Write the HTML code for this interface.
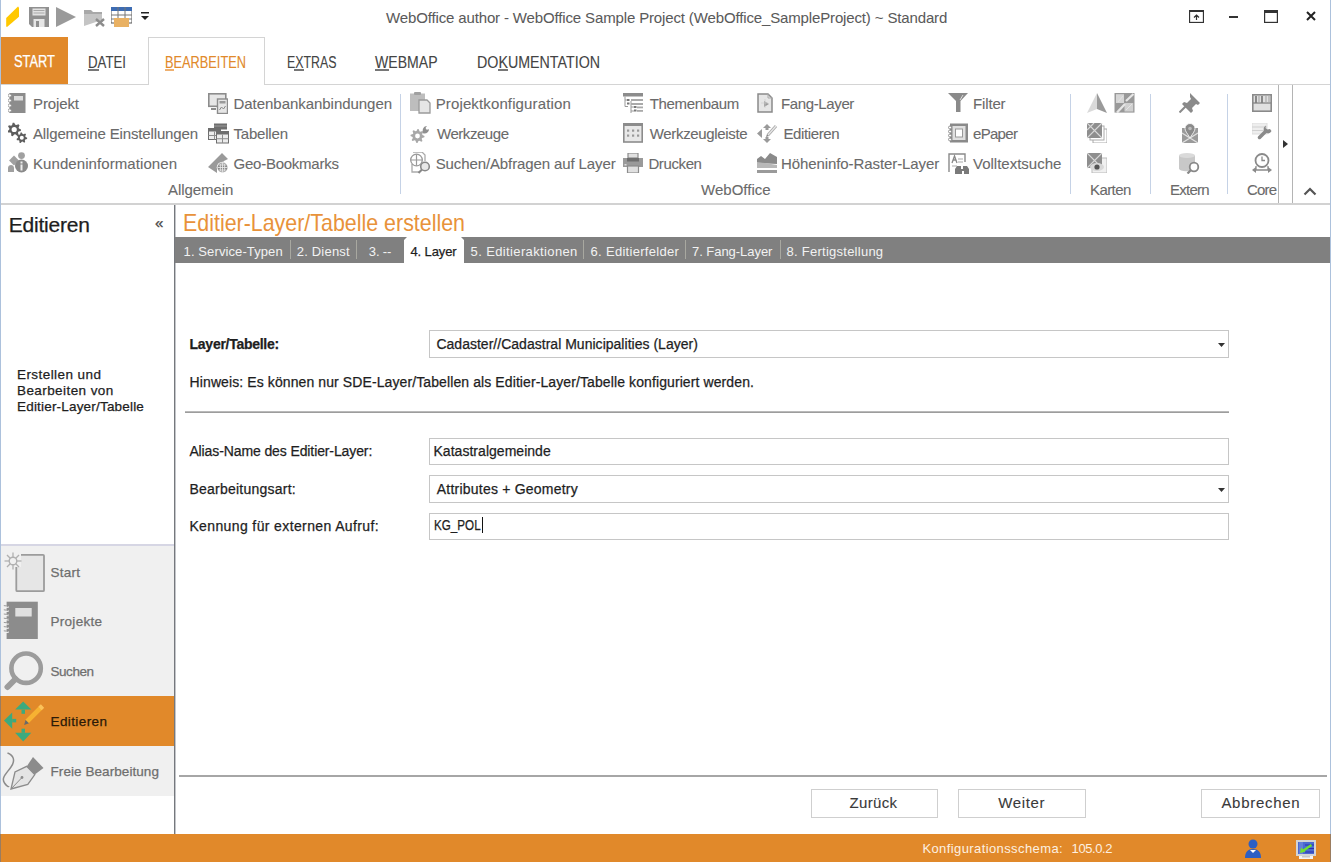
<!DOCTYPE html>
<html><head><meta charset="utf-8"><style>
html,body{margin:0;padding:0;width:1331px;height:862px;overflow:hidden;background:#fff;}
body{position:relative;font-family:"Liberation Sans",sans-serif;}
.t{position:absolute;white-space:nowrap;-webkit-text-stroke:0.25px currentColor;font-family:"Liberation Sans",sans-serif;}
svg{display:block;}
</style></head><body>
<div style="position:absolute;left:0px;top:0px;width:1331px;height:862px;background:#fff;"></div>
<div class="t" style="left:386px;top:10px;font-size:15px;line-height:15px;color:#5a5a5a;letter-spacing:-0.14px;-webkit-text-stroke:0.05px currentColor;">WebOffice author - WebOffice Sample Project (WebOffice_SampleProject) ~ Standard</div>
<svg style="position:absolute;left:6px;top:6px" width="14" height="22" viewBox="0 0 14 22"><polygon points="0.2,12 12,0.6 13,1.5 13,10.8 1,21 0.2,20.5" fill="#ffc800"/></svg>
<svg style="position:absolute;left:29px;top:7px" width="20" height="20" viewBox="0 0 20 20"><path d="M0 0h20v20H3l-3-3z" fill="#909090"/><rect x="3.5" y="1.5" width="13" height="7" fill="#e2e2e2"/><rect x="4.5" y="3" width="11" height="1" fill="#a8a8a8"/><rect x="4.5" y="5.5" width="11" height="1" fill="#a8a8a8"/><rect x="4.5" y="12" width="11" height="8" fill="#e6e6e6"/><rect x="7" y="14" width="3" height="6" fill="#909090"/></svg>
<svg style="position:absolute;left:56px;top:7px" width="20" height="20" viewBox="0 0 20 20"><polygon points="0,0 20,10 0,20" fill="#9a9a9a"/></svg>
<svg style="position:absolute;left:84px;top:8px" width="21" height="19" viewBox="0 0 21 19"><path d="M0 2h7l2 2h9v6H0z" fill="#a8a8a8"/><path d="M0 18V6h18v6" fill="#c4c4c4"/><path d="M12 11l8 7M20 11l-8 7" stroke="#8c8c8c" stroke-width="2.4"/></svg>
<svg style="position:absolute;left:111px;top:7px" width="21" height="20" viewBox="0 0 21 20"><rect x="0" y="0" width="21" height="16" fill="#fff" stroke="#555" stroke-width="1"/><rect x="0" y="0" width="21" height="4" fill="#3d6cb3"/><path d="M7 0v16M14 0v16M0 8h21M0 12h21" stroke="#777" stroke-width="1"/><rect x="3" y="11" width="15" height="9" fill="#e9b163"/></svg>
<svg style="position:absolute;left:141px;top:12px" width="9" height="9" viewBox="0 0 9 9"><rect x="0" y="0" width="8" height="1.5" fill="#222"/><polygon points="0,4 8,4 4,8" fill="#222"/></svg>
<svg style="position:absolute;left:1189px;top:10px" width="15" height="13" viewBox="0 0 15 13"><rect x="0.5" y="0.5" width="14" height="12" fill="none" stroke="#333" stroke-width="1.3"/><rect x="0" y="0" width="15" height="2" fill="#333"/><path d="M7.5 10V5M5 7.5l2.5-2.5 2.5 2.5" stroke="#333" stroke-width="1.2" fill="none"/></svg>
<div style="position:absolute;left:1229px;top:16px;width:9px;height:2px;background:#333;"></div>
<svg style="position:absolute;left:1264px;top:10px" width="14" height="13" viewBox="0 0 14 13"><rect x="0.6" y="0.6" width="12.8" height="11.8" fill="none" stroke="#333" stroke-width="1.2"/><rect x="0" y="0" width="14" height="3" fill="#333"/></svg>
<svg style="position:absolute;left:1306px;top:11px" width="10" height="10" viewBox="0 0 10 10"><path d="M1 1l8 8M9 1l-8 8" stroke="#222" stroke-width="2"/></svg>
<div style="position:absolute;left:1px;top:37px;width:67px;height:48px;background:#e1892a;"></div>
<div style="position:absolute;left:148px;top:37px;width:117px;height:48px;border:1px solid #d4d4d4;border-bottom:none;background:#fff;box-sizing:border-box;"></div>
<div style="position:absolute;left:1px;top:84px;width:147px;height:1px;background:#d4d4d4;"></div>
<div style="position:absolute;left:265px;top:84px;width:1065px;height:1px;background:#d4d4d4;"></div>
<div class="t" style="left:14px;top:54px;font-size:16px;line-height:16px;color:#fff;transform:scaleX(0.804);transform-origin:0 0;">START</div>
<div class="t" style="left:88px;top:55px;font-size:16px;line-height:16px;color:#444;transform:scaleX(0.827);transform-origin:0 0;-webkit-text-stroke:0.1px currentColor;">DATEI</div>
<div style="position:absolute;left:88px;top:69px;width:11px;height:2px;background:#777;"></div>
<div class="t" style="left:165px;top:55px;font-size:16px;line-height:16px;color:#e1892a;transform:scaleX(0.799);transform-origin:0 0;-webkit-text-stroke:0.1px currentColor;">BEARBEITEN</div>
<div style="position:absolute;left:165px;top:69px;width:9px;height:2px;background:#eeb070;"></div>
<div class="t" style="left:287px;top:55px;font-size:16px;line-height:16px;color:#444;transform:scaleX(0.773);transform-origin:0 0;-webkit-text-stroke:0.1px currentColor;">EXTRAS</div>
<div style="position:absolute;left:294px;top:69px;width:10px;height:2px;background:#777;"></div>
<div class="t" style="left:375px;top:55px;font-size:16px;line-height:16px;color:#444;transform:scaleX(0.879);transform-origin:0 0;-webkit-text-stroke:0.1px currentColor;">WEBMAP</div>
<div style="position:absolute;left:375px;top:69px;width:14px;height:2px;background:#777;"></div>
<div class="t" style="left:477px;top:55px;font-size:16px;line-height:16px;color:#444;transform:scaleX(0.891);transform-origin:0 0;-webkit-text-stroke:0.1px currentColor;">DOKUMENTATION</div>
<div style="position:absolute;left:498px;top:69px;width:10px;height:2px;background:#777;"></div>
<div class="t" style="left:33px;top:96px;font-size:15px;line-height:15px;color:#6a6a6a;letter-spacing:-0.11px;-webkit-text-stroke:0.1px currentColor;">Projekt</div>
<div class="t" style="left:33px;top:126px;font-size:15px;line-height:15px;color:#6a6a6a;letter-spacing:-0.15px;-webkit-text-stroke:0.1px currentColor;">Allgemeine Einstellungen</div>
<div class="t" style="left:33px;top:156px;font-size:15px;line-height:15px;color:#6a6a6a;letter-spacing:0.08px;-webkit-text-stroke:0.1px currentColor;">Kundeninformationen</div>
<div class="t" style="left:233.5px;top:96px;font-size:15px;line-height:15px;color:#6a6a6a;letter-spacing:-0.04px;-webkit-text-stroke:0.1px currentColor;">Datenbankanbindungen</div>
<div class="t" style="left:233.5px;top:126px;font-size:15px;line-height:15px;color:#6a6a6a;letter-spacing:-0.20px;-webkit-text-stroke:0.1px currentColor;">Tabellen</div>
<div class="t" style="left:233.5px;top:156px;font-size:15px;line-height:15px;color:#6a6a6a;letter-spacing:-0.24px;-webkit-text-stroke:0.1px currentColor;">Geo-Bookmarks</div>
<div class="t" style="left:168px;top:182px;font-size:15px;line-height:15px;color:#6a6a6a;letter-spacing:-0.05px;-webkit-text-stroke:0.1px currentColor;">Allgemein</div>
<div class="t" style="left:435.7px;top:96px;font-size:15px;line-height:15px;color:#6a6a6a;letter-spacing:0.13px;-webkit-text-stroke:0.1px currentColor;">Projektkonfiguration</div>
<div class="t" style="left:437px;top:126px;font-size:15px;line-height:15px;color:#6a6a6a;letter-spacing:-0.45px;-webkit-text-stroke:0.1px currentColor;">Werkzeuge</div>
<div class="t" style="left:435.7px;top:156px;font-size:15px;line-height:15px;color:#6a6a6a;letter-spacing:-0.11px;-webkit-text-stroke:0.1px currentColor;">Suchen/Abfragen auf Layer</div>
<div class="t" style="left:649.8px;top:96px;font-size:15px;line-height:15px;color:#6a6a6a;letter-spacing:-0.35px;-webkit-text-stroke:0.1px currentColor;">Themenbaum</div>
<div class="t" style="left:649.8px;top:126px;font-size:15px;line-height:15px;color:#6a6a6a;letter-spacing:-0.34px;-webkit-text-stroke:0.1px currentColor;">Werkzeugleiste</div>
<div class="t" style="left:648.4px;top:156px;font-size:15px;line-height:15px;color:#6a6a6a;letter-spacing:-0.38px;-webkit-text-stroke:0.1px currentColor;">Drucken</div>
<div class="t" style="left:701px;top:182px;font-size:15px;line-height:15px;color:#6a6a6a;letter-spacing:0.02px;-webkit-text-stroke:0.1px currentColor;">WebOffice</div>
<div class="t" style="left:780.9px;top:96px;font-size:15px;line-height:15px;color:#6a6a6a;letter-spacing:-0.36px;-webkit-text-stroke:0.1px currentColor;">Fang-Layer</div>
<div class="t" style="left:783.4px;top:126px;font-size:15px;line-height:15px;color:#6a6a6a;letter-spacing:-0.38px;-webkit-text-stroke:0.1px currentColor;">Editieren</div>
<div class="t" style="left:780.9px;top:156px;font-size:15px;line-height:15px;color:#6a6a6a;letter-spacing:-0.08px;-webkit-text-stroke:0.1px currentColor;">Höheninfo-Raster-Layer</div>
<div class="t" style="left:973px;top:96px;font-size:15px;line-height:15px;color:#6a6a6a;letter-spacing:-0.15px;-webkit-text-stroke:0.1px currentColor;">Filter</div>
<div class="t" style="left:973px;top:126px;font-size:15px;line-height:15px;color:#6a6a6a;letter-spacing:-0.69px;-webkit-text-stroke:0.1px currentColor;">ePaper</div>
<div class="t" style="left:973px;top:156px;font-size:15px;line-height:15px;color:#6a6a6a;-webkit-text-stroke:0.1px currentColor;">Volltextsuche</div>
<div class="t" style="left:1090px;top:182px;font-size:15px;line-height:15px;color:#6a6a6a;letter-spacing:-0.58px;-webkit-text-stroke:0.1px currentColor;">Karten</div>
<div class="t" style="left:1170px;top:182px;font-size:15px;line-height:15px;color:#6a6a6a;letter-spacing:-0.73px;-webkit-text-stroke:0.1px currentColor;">Extern</div>
<div class="t" style="left:1247px;top:182px;font-size:15px;line-height:15px;color:#6a6a6a;letter-spacing:-0.84px;width:31px;overflow:hidden;-webkit-text-stroke:0.1px currentColor;">Core</div>
<div style="position:absolute;left:400px;top:94px;width:1px;height:100px;background:#c5d2e6;"></div>
<div style="position:absolute;left:1070px;top:94px;width:1px;height:100px;background:#c5d2e6;"></div>
<div style="position:absolute;left:1150px;top:94px;width:1px;height:100px;background:#c5d2e6;"></div>
<div style="position:absolute;left:1227px;top:94px;width:1px;height:100px;background:#c5d2e6;"></div>
<div style="position:absolute;left:1278px;top:85px;width:15px;height:119px;border:1px solid #b4b4b4;border-bottom:none;border-top:none;box-sizing:border-box;background:#fff;"></div>
<svg style="position:absolute;left:1283px;top:140px" width="5" height="8" viewBox="0 0 5 8"><polygon points="0,0 5,4 0,8" fill="#333"/></svg>
<svg style="position:absolute;left:1303px;top:187px" width="14" height="9" viewBox="0 0 14 9"><path d="M1.5 7.5L7 2l5.5 5.5" stroke="#555" stroke-width="2.2" fill="none"/></svg>
<div style="position:absolute;left:1px;top:203px;width:1329px;height:2px;background:#d2d2d2;"></div>
<div style="position:absolute;left:174px;top:205px;width:1px;height:629px;background:#75787d;"></div>
<div style="position:absolute;left:175px;top:205px;width:1px;height:629px;background:#c4c6ca;"></div>
<div class="t" style="left:8.7px;top:214px;font-size:21px;line-height:21px;color:#1e1e1e;letter-spacing:-0.20px;">Editieren</div>
<div class="t" style="left:155px;top:215px;font-size:15px;line-height:15px;color:#444;">«</div>
<div class="t" style="left:17px;top:368px;font-size:13.5px;line-height:13.5px;color:#1e1e1e;letter-spacing:0.43px;">Erstellen und</div>
<div class="t" style="left:17px;top:384px;font-size:13.5px;line-height:13.5px;color:#1e1e1e;letter-spacing:0.42px;">Bearbeiten von</div>
<div class="t" style="left:17px;top:400px;font-size:13.5px;line-height:13.5px;color:#1e1e1e;letter-spacing:0.19px;">Editier-Layer/Tabelle</div>
<div style="position:absolute;left:1px;top:544px;width:173px;height:252px;background:#f0f0f0;"></div>
<div style="position:absolute;left:1px;top:544px;width:173px;height:2px;background:#d6d6e4;"></div>
<div style="position:absolute;left:0px;top:696px;width:174px;height:50px;background:#e1892a;"></div>
<div class="t" style="left:50.5px;top:566px;font-size:13.5px;line-height:13.5px;color:#6e6e6e;letter-spacing:0.25px;">Start</div>
<div class="t" style="left:50.5px;top:615px;font-size:13.5px;line-height:13.5px;color:#6e6e6e;letter-spacing:0.28px;">Projekte</div>
<div class="t" style="left:50.5px;top:665px;font-size:13.5px;line-height:13.5px;color:#6e6e6e;letter-spacing:-0.46px;">Suchen</div>
<div class="t" style="left:50.5px;top:715px;font-size:13.5px;line-height:13.5px;color:#2b1a08;letter-spacing:0.40px;">Editieren</div>
<div class="t" style="left:50.5px;top:765px;font-size:13.5px;line-height:13.5px;color:#6e6e6e;letter-spacing:0.07px;">Freie Bearbeitung</div>
<div class="t" style="left:182.5px;top:210.5px;font-size:24px;line-height:24px;color:#e8923a;transform:scaleX(0.892);transform-origin:0 0;-webkit-text-stroke:0;">Editier-Layer/Tabelle erstellen</div>
<div style="position:absolute;left:175px;top:237px;width:1155px;height:26px;background:#808080;"></div>
<div style="position:absolute;left:404px;top:237px;width:60px;height:26px;background:#fff;"></div>
<svg style="position:absolute;left:401px;top:237px" width="6" height="4" viewBox="0 0 6 4"><polygon points="0,0 6,0 3,3 3,4 0,4" fill="#808080"/></svg>
<svg style="position:absolute;left:461px;top:237px" width="6" height="4" viewBox="0 0 6 4"><polygon points="0,0 6,0 6,4 3,4 3,3" fill="#808080"/></svg>
<div class="t" style="left:183.6px;top:245px;font-size:13px;line-height:13px;color:#f2f2f2;letter-spacing:0.10px;-webkit-text-stroke:0;">1. Service-Typen</div>
<div class="t" style="left:296.7px;top:245px;font-size:13px;line-height:13px;color:#f2f2f2;letter-spacing:0.21px;-webkit-text-stroke:0;">2. Dienst</div>
<div class="t" style="left:368.8px;top:245px;font-size:13px;line-height:13px;color:#f2f2f2;letter-spacing:-0.13px;-webkit-text-stroke:0;">3. --</div>
<div class="t" style="left:410.5px;top:245px;font-size:13px;line-height:13px;color:#1e1e1e;letter-spacing:-0.11px;">4. Layer</div>
<div class="t" style="left:470.6px;top:245px;font-size:13px;line-height:13px;color:#f2f2f2;letter-spacing:0.37px;-webkit-text-stroke:0;">5. Editieraktionen</div>
<div class="t" style="left:590.6px;top:245px;font-size:13px;line-height:13px;color:#f2f2f2;letter-spacing:0.29px;-webkit-text-stroke:0;">6. Editierfelder</div>
<div class="t" style="left:692px;top:245px;font-size:13px;line-height:13px;color:#f2f2f2;letter-spacing:-0.04px;-webkit-text-stroke:0;">7. Fang-Layer</div>
<div class="t" style="left:786.6px;top:245px;font-size:13px;line-height:13px;color:#f2f2f2;letter-spacing:0.25px;-webkit-text-stroke:0;">8. Fertigstellung</div>
<div style="position:absolute;left:290px;top:240px;width:1px;height:19px;background:#a8a8a0;"></div>
<div style="position:absolute;left:356px;top:240px;width:1px;height:19px;background:#a8a8a0;"></div>
<div style="position:absolute;left:583px;top:240px;width:1px;height:19px;background:#a8a8a0;"></div>
<div style="position:absolute;left:685px;top:240px;width:1px;height:19px;background:#a8a8a0;"></div>
<div style="position:absolute;left:780px;top:240px;width:1px;height:19px;background:#a8a8a0;"></div>
<div class="t" style="left:189.6px;top:337px;font-size:14px;line-height:14px;color:#1e1e1e;letter-spacing:-0.28px;font-weight:bold;">Layer/Tabelle:</div>
<div style="position:absolute;left:429px;top:330px;width:800px;height:28px;border:1.5px solid #c6c6c6;box-sizing:border-box;background:#fff;"></div>
<div class="t" style="left:436.4px;top:337px;font-size:14px;line-height:14px;color:#1e1e1e;letter-spacing:0.02px;">Cadaster//Cadastral Municipalities (Layer)</div>
<svg style="position:absolute;left:1218px;top:343px" width="7" height="4" viewBox="0 0 7 4"><polygon points="0,0 7,0 3.5,4" fill="#333"/></svg>
<div class="t" style="left:189.6px;top:375px;font-size:14px;line-height:14px;color:#1e1e1e;letter-spacing:0.10px;">Hinweis: Es können nur SDE-Layer/Tabellen als Editier-Layer/Tabelle konfiguriert werden.</div>
<div style="position:absolute;left:185px;top:411px;width:1044px;height:2px;background:linear-gradient(#c8c8c8,#8e8e8e);"></div>
<div class="t" style="left:189.4px;top:444px;font-size:14px;line-height:14px;color:#1e1e1e;letter-spacing:-0.11px;">Alias-Name des Editier-Layer:</div>
<div style="position:absolute;left:429px;top:438px;width:800px;height:27px;border:1.5px solid #c6c6c6;box-sizing:border-box;background:#fff;"></div>
<div class="t" style="left:433.5px;top:444px;font-size:14px;line-height:14px;color:#1e1e1e;letter-spacing:0.03px;">Katastralgemeinde</div>
<div class="t" style="left:189.4px;top:482px;font-size:14px;line-height:14px;color:#1e1e1e;letter-spacing:0.24px;">Bearbeitungsart:</div>
<div style="position:absolute;left:429px;top:475px;width:800px;height:28px;border:1.5px solid #c6c6c6;box-sizing:border-box;background:#fff;"></div>
<div class="t" style="left:436.8px;top:482px;font-size:14px;line-height:14px;color:#1e1e1e;letter-spacing:0.22px;">Attributes + Geometry</div>
<svg style="position:absolute;left:1218px;top:488px" width="7" height="4" viewBox="0 0 7 4"><polygon points="0,0 7,0 3.5,4" fill="#333"/></svg>
<div class="t" style="left:189.4px;top:519px;font-size:14px;line-height:14px;color:#1e1e1e;letter-spacing:0.38px;">Kennung für externen Aufruf:</div>
<div style="position:absolute;left:429px;top:513px;width:800px;height:27px;border:1.5px solid #c6c6c6;box-sizing:border-box;background:#fff;"></div>
<div class="t" style="left:433.5px;top:518px;font-size:14px;line-height:14px;color:#1e1e1e;transform:scaleX(0.832);transform-origin:0 0;">KG_POL</div>
<div style="position:absolute;left:482px;top:517px;width:1px;height:16px;background:#111;"></div>
<div style="position:absolute;left:179px;top:775px;width:1148px;height:2px;background:#a6a6a6;"></div>
<div style="position:absolute;left:811px;top:789px;width:127px;height:29px;border:1px solid #cfcfcf;box-sizing:border-box;background:#fff;"></div>
<div class="t" style="left:849.6px;top:795px;font-size:15px;line-height:15px;color:#3a3a3a;letter-spacing:0.31px;-webkit-text-stroke:0.1px currentColor;">Zurück</div>
<div style="position:absolute;left:958px;top:789px;width:128px;height:29px;border:1px solid #cfcfcf;box-sizing:border-box;background:#fff;"></div>
<div class="t" style="left:998.3px;top:795px;font-size:15px;line-height:15px;color:#3a3a3a;letter-spacing:0.63px;-webkit-text-stroke:0.1px currentColor;">Weiter</div>
<div style="position:absolute;left:1201px;top:789px;width:119px;height:29px;border:1px solid #cfcfcf;box-sizing:border-box;background:#fff;"></div>
<div class="t" style="left:1221.4px;top:795px;font-size:15px;line-height:15px;color:#3a3a3a;letter-spacing:0.72px;-webkit-text-stroke:0.1px currentColor;">Abbrechen</div>
<div style="position:absolute;left:0px;top:834px;width:1331px;height:28px;background:#e1892a;"></div>
<div class="t" style="left:922.4px;top:842px;font-size:13px;line-height:13px;color:#fdf0e0;letter-spacing:0.40px;-webkit-text-stroke:0;">Konfigurationsschema:</div>
<div class="t" style="left:1071.6px;top:842px;font-size:13px;line-height:13px;color:#fdf0e0;letter-spacing:-0.43px;-webkit-text-stroke:0;">105.0.2</div>
<svg style="position:absolute;left:1245px;top:839px" width="16" height="20" viewBox="0 0 16 20"><circle cx="8" cy="5" r="4.5" fill="#2c5fc4"/><path d="M0 19c0-6 3-9 8-9s8 3 8 9z" fill="#2c5fc4"/><path d="M5 11l3 3 3-3z" fill="#fff"/></svg>
<svg style="position:absolute;left:1296px;top:840px" width="20" height="19" viewBox="0 0 20 19"><rect x="0" y="0" width="20" height="16" fill="#d4d4d4"/><rect x="2" y="2" width="16" height="12" fill="#4a6ad0"/><path d="M4 2v12M6 2v12" stroke="#8aa0e8" stroke-width="0.8"/><path d="M9 5h9M9 8.5h9M9 12h9" stroke="#2830b0" stroke-width="1"/><path d="M15.5 5L6 11.5" stroke="#6ee030" stroke-width="2.2"/><polygon points="4,13 5,7.5 9.5,11.5" fill="#6ee030"/><rect x="3" y="16" width="14" height="3" fill="#f4f4f4"/><rect x="6" y="16" width="8" height="1.5" fill="#c8c8c8"/></svg>
<svg style="position:absolute;left:8px;top:93px" width="18" height="20" viewBox="0 0 18 20"><rect x="1.5" y="0" width="16" height="20" fill="#8c8c8c"/><rect x="6" y="3" width="9" height="4.5" fill="#dcdcdc"/><circle cx="1.8" cy="2.5" r="1.6" fill="#fff" stroke="#8c8c8c" stroke-width="0.8"/><circle cx="1.8" cy="7.5" r="1.6" fill="#fff" stroke="#8c8c8c" stroke-width="0.8"/><circle cx="1.8" cy="12.5" r="1.6" fill="#fff" stroke="#8c8c8c" stroke-width="0.8"/><circle cx="1.8" cy="17.5" r="1.6" fill="#fff" stroke="#8c8c8c" stroke-width="0.8"/></svg>
<svg style="position:absolute;left:8px;top:122px" width="20" height="21" viewBox="0 0 20 21"><path d="M13.00,7.50 L12.83,9.01 L10.61,9.62 L10.03,10.55 L10.44,12.82 L9.15,13.63 L7.29,12.27 L6.20,12.40 L4.69,14.13 L3.25,13.63 L3.15,11.33 L2.37,10.55 L0.07,10.45 L-0.43,9.01 L1.30,7.50 L1.43,6.41 L0.07,4.55 L0.88,3.26 L3.15,3.67 L4.08,3.09 L4.69,0.87 L6.20,0.70 L7.29,2.73 L8.32,3.09 L10.44,2.18 L11.52,3.26 L10.61,5.38 L10.97,6.41Z M8.8,7.5 a2.6,2.6 0 1,0 -5.2,0 a2.6,2.6 0 1,0 5.2,0Z" fill="#5e5e5e" fill-rule="evenodd"/><path d="M19.20,15.80 L19.06,17.00 L17.30,17.49 L16.84,18.22 L17.17,20.02 L16.14,20.67 L14.67,19.59 L13.80,19.69 L12.60,21.06 L11.46,20.67 L11.38,18.84 L10.76,18.22 L8.93,18.14 L8.54,17.00 L9.91,15.80 L10.01,14.93 L8.93,13.46 L9.58,12.43 L11.38,12.76 L12.11,12.30 L12.60,10.54 L13.80,10.40 L14.67,12.01 L15.49,12.30 L17.17,11.58 L18.02,12.43 L17.30,14.11 L17.59,14.93Z M15.8,15.8 a2.0,2.0 0 1,0 -4.0,0 a2.0,2.0 0 1,0 4.0,0Z" fill="#5e5e5e" fill-rule="evenodd"/></svg>
<svg style="position:absolute;left:7px;top:152px" width="21" height="21" viewBox="0 0 21 21"><circle cx="14.5" cy="3.6" r="3.4" fill="#a0a0a0"/><rect x="3.5" y="5" width="7" height="7" transform="rotate(45 7 8.5)" fill="#a0a0a0"/><path d="M1 20v-4c0-2 1.5-3 3-3s3 1 3 3v4z" fill="#a0a0a0"/><circle cx="14.5" cy="14" r="6.5" fill="#8a8a8a"/><rect x="13.5" y="9.5" width="2" height="2" fill="#eee"/><rect x="13.5" y="12.5" width="2" height="6" fill="#eee"/></svg>
<svg style="position:absolute;left:208px;top:93px" width="20" height="21" viewBox="0 0 20 21"><rect x="0.8" y="0.8" width="17" height="12.5" fill="#e6e6e6" stroke="#8c8c8c" stroke-width="1.6"/><rect x="3" y="15" width="5" height="2" fill="#8c8c8c"/><rect x="9.5" y="6" width="10" height="14.5" fill="#e6e6e6" stroke="#8c8c8c" stroke-width="1.4"/><rect x="11.5" y="8" width="6" height="2.5" fill="#9a9a9a"/><path d="M11.5 17l2-3 2 2 2-3" stroke="#888" stroke-width="1" fill="none"/></svg>
<svg style="position:absolute;left:208px;top:123px" width="21" height="21" viewBox="0 0 21 21"><rect x="6" y="0.5" width="13" height="6" fill="#6e6e6e"/><path d="M6 3h13" stroke="#aaa" stroke-width="0.8"/><rect x="0.5" y="5.5" width="12" height="11" fill="#ececec" stroke="#6e6e6e" stroke-width="1"/><rect x="0.5" y="5.5" width="12" height="3" fill="#6e6e6e"/><path d="M6.5 8.5v8M0.5 12.5h12" stroke="#8c8c8c" stroke-width="1"/><rect x="8.5" y="8.5" width="12" height="11.5" fill="#ececec" stroke="#6e6e6e" stroke-width="1"/><rect x="8.5" y="8.5" width="12" height="3" fill="#6e6e6e"/><path d="M14.5 11.5v8.5M8.5 15.75h12" stroke="#8c8c8c" stroke-width="1"/></svg>
<svg style="position:absolute;left:208px;top:153px" width="21" height="21" viewBox="0 0 21 21"><polygon points="0,14 14,0 20,6 16,8 9,16 9,20" fill="#9a9a9a"/><circle cx="14.5" cy="14.5" r="5.8" fill="#fff"/><circle cx="14.5" cy="14.5" r="5" fill="#8a8a8a"/><path d="M9.5 14.5h10M14.5 9.5v10M10.5 12h8M10.5 17h8" stroke="#eee" stroke-width="0.8"/><ellipse cx="14.5" cy="14.5" rx="2.2" ry="5" fill="none" stroke="#eee" stroke-width="0.8"/></svg>
<svg style="position:absolute;left:410px;top:92px" width="21" height="22" viewBox="0 0 21 22"><rect x="0" y="1.5" width="15" height="17.5" fill="#bdbdbd"/><rect x="4" y="0" width="7" height="3" rx="1" fill="#a0a0a0"/><path d="M9 8h8l3 3v10H9z" fill="#e6e6e6" stroke="#9a9a9a" stroke-width="1.3"/></svg>
<svg style="position:absolute;left:410px;top:123px" width="21" height="21" viewBox="0 0 21 21"><path d="M14.50,13.00 L14.37,14.37 L12.16,14.93 L11.69,15.80 L12.45,17.95 L11.39,18.82 L9.43,17.66 L8.48,17.94 L7.50,20.00 L6.13,19.87 L5.57,17.66 L4.70,17.19 L2.55,17.95 L1.68,16.89 L2.84,14.93 L2.56,13.98 L0.50,13.00 L0.63,11.63 L2.84,11.07 L3.31,10.20 L2.55,8.05 L3.61,7.18 L5.57,8.34 L6.52,8.06 L7.50,6.00 L8.87,6.13 L9.43,8.34 L10.30,8.81 L12.45,8.05 L13.32,9.11 L12.16,11.07 L12.44,12.02Z M9.9,13 a2.4,2.4 0 1,0 -4.8,0 a2.4,2.4 0 1,0 4.8,0Z" fill="#a8a8a8" fill-rule="evenodd"/><path d="M13 9c-1-3 1-6 4-6l-1.5 2 1.2 1.8 2.3-.6c0 3-3 5-6 4z" fill="#909090"/></svg>
<svg style="position:absolute;left:410px;top:152px" width="21" height="22" viewBox="0 0 21 22"><path d="M3 0h9l3 3v6" stroke="#aaa" stroke-width="1.3" fill="none"/><path d="M2 12v8h7" stroke="#aaa" stroke-width="1.3" fill="none"/><circle cx="6.5" cy="8" r="5.8" fill="none" stroke="#9a9a9a" stroke-width="1.3"/><path d="M0.8 8h11.5M6.5 2.2v11.6" stroke="#9a9a9a" stroke-width="1.2"/><circle cx="15" cy="14.5" r="4.3" fill="#e8e8e8" stroke="#888" stroke-width="1.6"/><path d="M12 17.5l-3.5 3.5" stroke="#888" stroke-width="2.2"/></svg>
<svg style="position:absolute;left:623px;top:93px" width="20" height="20" viewBox="0 0 20 20"><rect x="0" y="0" width="20" height="3.5" fill="#8c8c8c"/><path d="M2 3.5v10h3M2 7h3M8 8v12M8 14h3M8 18h3" stroke="#999" stroke-width="1" fill="none"/><rect x="4" y="6" width="2.5" height="2" fill="#777"/><rect x="4" y="9.5" width="2.5" height="2" fill="#777"/><rect x="8" y="6" width="12" height="2" fill="#aaa"/><rect x="8" y="10" width="12" height="2" fill="#aaa"/><rect x="11" y="13" width="2.5" height="2" fill="#777"/><rect x="11" y="16.5" width="2.5" height="2" fill="#777"/><rect x="14" y="13.5" width="6" height="1.8" fill="#aaa"/><rect x="14" y="17" width="6" height="1.8" fill="#aaa"/></svg>
<svg style="position:absolute;left:623px;top:123px" width="20" height="20" viewBox="0 0 20 20"><rect x="0.8" y="0.8" width="18.4" height="18.2" fill="#e8e8e8" stroke="#8c8c8c" stroke-width="1.6"/><rect x="0" y="0" width="20" height="3" fill="#8c8c8c"/><rect x="4" y="6.5" width="2.2" height="2.2" fill="#999"/><rect x="9" y="6.5" width="2.2" height="2.2" fill="#999"/><rect x="14" y="6.5" width="2.2" height="2.2" fill="#999"/><rect x="4" y="11.5" width="2.2" height="2.2" fill="#999"/><rect x="9" y="11.5" width="2.2" height="2.2" fill="#999"/><rect x="14" y="11.5" width="2.2" height="2.2" fill="#999"/></svg>
<svg style="position:absolute;left:623px;top:153px" width="20" height="20" viewBox="0 0 20 20"><rect x="5" y="0" width="10" height="5" fill="#e0e0e0" stroke="#8c8c8c" stroke-width="1.2"/><rect x="0" y="5" width="20" height="9" fill="#9a9a9a"/><rect x="4" y="5" width="12" height="3.5" fill="#6e6e6e"/><rect x="4.5" y="13" width="11" height="7" fill="#e0e0e0" stroke="#8c8c8c" stroke-width="1.2"/><rect x="1.5" y="11" width="2" height="1.5" fill="#ddd"/></svg>
<svg style="position:absolute;left:757px;top:93px" width="16" height="20" viewBox="0 0 16 20"><path d="M1 1h10l4 4v14H1z" fill="#e6e6e6" stroke="#8a8a8a" stroke-width="1.5"/><path d="M11 1v4h4" fill="none" stroke="#aaa" stroke-width="1"/><polygon points="7,8 12,11 7,14" fill="#999"/><path d="M4 10h7M8 6v9" stroke="#ccc" stroke-width="0.7"/></svg>
<svg style="position:absolute;left:757px;top:123px" width="21" height="21" viewBox="0 0 21 21"><polygon points="6,5 14,5 10,1" fill="#9a9a9a"/><rect x="8.5" y="5" width="3" height="2" fill="#9a9a9a"/><polygon points="0,10.5 5,6 5,15" fill="#9a9a9a"/><polygon points="6,16 14,16 10,20" fill="#9a9a9a"/><rect x="8.5" y="14" width="3" height="2" fill="#9a9a9a"/><path d="M11 12L19 3" stroke="#aaa" stroke-width="3"/><path d="M11 12L19 3" stroke="#e8e8e8" stroke-width="1.2"/><polygon points="9,14 10,11 12,13" fill="#888"/></svg>
<svg style="position:absolute;left:757px;top:153px" width="20" height="20" viewBox="0 0 20 20"><polygon points="0,6 4,3 8,6 13,0 20,4 20,11 0,10" fill="#8a8a8a"/><polygon points="0,9 8,10 14,11 20,12 20,15 0,15" fill="#b8b8b8"/><rect x="0" y="17" width="20" height="3" fill="#9a9a9a"/></svg>
<svg style="position:absolute;left:948px;top:93px" width="20" height="19" viewBox="0 0 20 19"><polygon points="0,0 20,0 12.5,8 12.5,19 8,19 8,8" fill="#8a8a8a"/><path d="M15 2l-3 5" stroke="#ddd" stroke-width="1"/></svg>
<svg style="position:absolute;left:948px;top:123px" width="20" height="20" viewBox="0 0 20 20"><rect x="2" y="0.5" width="18" height="19" fill="#8a8a8a"/><rect x="4.5" y="3" width="13" height="14" fill="#e0e0e0"/><rect x="7.5" y="6" width="7" height="8" fill="#fff" stroke="#999" stroke-width="1"/><circle cx="2" cy="4.5" r="1.5" fill="#fff" stroke="#8a8a8a" stroke-width="0.9"/><circle cx="2" cy="8.5" r="1.5" fill="#fff" stroke="#8a8a8a" stroke-width="0.9"/><circle cx="2" cy="12.5" r="1.5" fill="#fff" stroke="#8a8a8a" stroke-width="0.9"/><circle cx="2" cy="16.5" r="1.5" fill="#fff" stroke="#8a8a8a" stroke-width="0.9"/></svg>
<svg style="position:absolute;left:948px;top:153px" width="21" height="21" viewBox="0 0 21 21"><path d="M1 19V1h16v8" fill="none" stroke="#8a8a8a" stroke-width="1.4"/><path d="M4 10l2.5-7 2.5 7M5 7h3" stroke="#888" stroke-width="1.3" fill="none"/><path d="M10 6h5M10 9h5M4 13h5" stroke="#aaa" stroke-width="1.2"/><path d="M7 21v-5l2-3h4v3h2v-3h4l2 3v5h-5v-3h-2v3z" fill="#7a7a7a"/></svg>
<svg style="position:absolute;left:1087px;top:93px" width="20" height="20" viewBox="0 0 20 20"><polygon points="10,0 10,16 0,20" fill="#dadada"/><polygon points="10,0 20,20 10,16" fill="#9a9a9a"/></svg>
<svg style="position:absolute;left:1114px;top:93px" width="21" height="20" viewBox="0 0 21 20"><rect x="0.5" y="0" width="20" height="19.6" fill="#999"/><rect x="2" y="1.2" width="8" height="8.8" fill="#d6d6d6"/><rect x="10.5" y="10" width="8.7" height="8.5" fill="#d0d0d0"/><path d="M3 19.6L11 11M12 8L19.5 1" stroke="#e6e6e6" stroke-width="2.2"/><path d="M4 9L9 3M12 17l6-6" stroke="#e4e4e4" stroke-width="1"/></svg>
<svg style="position:absolute;left:1087px;top:123px" width="20" height="20" viewBox="0 0 20 20"><rect x="6" y="6" width="14" height="14" fill="#fff" stroke="#aaa" stroke-width="1"/><rect x="3" y="3" width="14" height="14" fill="#fff" stroke="#aaa" stroke-width="1"/><rect x="0" y="0" width="15" height="15" fill="#8e8e8e"/><path d="M0 0L15 15M15 0L0 15M0 7l7-7" stroke="#d8d8d8" stroke-width="1.2"/></svg>
<svg style="position:absolute;left:1087px;top:153px" width="20" height="20" viewBox="0 0 20 20"><rect x="5" y="5" width="15" height="15" fill="#f0f0f0" stroke="#bbb" stroke-width="1"/><rect x="0" y="0" width="15" height="15" fill="#8e8e8e"/><path d="M0 0L15 15M15 0L0 15" stroke="#d8d8d8" stroke-width="1.2"/><ellipse cx="10" cy="14" rx="7" ry="4" fill="#d8d8d8"/><circle cx="10" cy="14" r="2.6" fill="#555"/></svg>
<svg style="position:absolute;left:1179px;top:93px" width="21" height="20" viewBox="0 0 21 20"><path d="M11 0l10 10-2 2-2-1-4 4 1 3-2 2-9-9 2-2 3 1 4-4-1-2z" fill="#8a8a8a"/><path d="M7 13L0.5 19.5" stroke="#8a8a8a" stroke-width="2"/></svg>
<svg style="position:absolute;left:1182px;top:123px" width="16" height="20" viewBox="0 0 16 20"><rect x="0" y="5" width="16" height="15" fill="#9a9a9a"/><path d="M0 20L16 10M16 20L0 10" stroke="#e0e0e0" stroke-width="1.2"/><path d="M8 15C5 10 3 8 3 5.5a5 5 0 0 1 10 0C13 8 11 10 8 15z" fill="#8a8a8a" stroke="#fff" stroke-width="0.8"/><circle cx="8" cy="5.5" r="1.8" fill="#bbb"/></svg>
<svg style="position:absolute;left:1179px;top:153px" width="21" height="21" viewBox="0 0 21 21"><path d="M0 2.5v13c0 1.5 3 2.8 8 2.8s8-1.3 8-2.8v-13z" fill="#c8c8c8"/><ellipse cx="8" cy="2.5" rx="8" ry="2.5" fill="#dadada"/><circle cx="15" cy="14" r="4.3" fill="#fff" stroke="#888" stroke-width="1.8"/><path d="M12 17l-3.5 3.5" stroke="#888" stroke-width="2.3"/></svg>
<svg style="position:absolute;left:1252px;top:94px" width="20" height="18" viewBox="0 0 20 18"><rect x="0.8" y="0.8" width="18.4" height="16.4" fill="#e0e0e0" stroke="#8a8a8a" stroke-width="1.6"/><path d="M0 9h20" stroke="#8a8a8a" stroke-width="1.4"/><path d="M4 2v7M7 2v7M10 2v7M14 2v7M17 2v7" stroke="#aaa" stroke-width="1.2"/><path d="M4 2v7M10 2v7" stroke="#777" stroke-width="1.5"/></svg>
<svg style="position:absolute;left:1252px;top:123px" width="20" height="20" viewBox="0 0 20 20"><rect x="0" y="0" width="15" height="11" fill="#eee" stroke="#ddd" stroke-width="1"/><path d="M0 4h15M0 7.5h15" stroke="#d0d0d0" stroke-width="1"/><path d="M19.5 8c-1 2-3 3-5 2l-6 6a1.8 1.8 0 0 1-2.5-2.5l6-6c-1-2 0-4 2-5l-.5 2.5 2 1.5 2.5-.5z" fill="#8a8a8a"/></svg>
<svg style="position:absolute;left:1252px;top:153px" width="20" height="20" viewBox="0 0 20 20"><circle cx="10" cy="7.5" r="6.5" fill="#fff" stroke="#8a8a8a" stroke-width="1.8"/><path d="M10 3.5v4h3" stroke="#8a8a8a" stroke-width="1.3" fill="none"/><path d="M3 17h14" stroke="#8a8a8a" stroke-width="1.5"/><polygon points="0,17 4,14 4,20" fill="#8a8a8a"/><polygon points="20,17 16,14 16,20" fill="#8a8a8a"/><path d="M4 13v4M16 13v4" stroke="#8a8a8a" stroke-width="1.3"/></svg>
<svg style="position:absolute;left:2px;top:550px" width="45" height="44" viewBox="0 0 45 44"><rect x="14.3" y="4.8" width="27.7" height="36.4" rx="1" fill="#e6e6e6" stroke="#9c9c9c" stroke-width="1.8"/><rect x="3" y="2" width="16" height="15" fill="#f0f0f0"/><path d="M13.50 11.00L19.50 11.00" stroke="#b0b0b0" stroke-width="1.3"/><path d="M12.77 12.77L17.01 17.01" stroke="#b0b0b0" stroke-width="1.3"/><path d="M11.00 13.50L11.00 19.50" stroke="#b0b0b0" stroke-width="1.3"/><path d="M9.23 12.77L4.99 17.01" stroke="#b0b0b0" stroke-width="1.3"/><path d="M8.50 11.00L2.50 11.00" stroke="#b0b0b0" stroke-width="1.3"/><path d="M9.23 9.23L4.99 4.99" stroke="#b0b0b0" stroke-width="1.3"/><path d="M11.00 8.50L11.00 2.50" stroke="#b0b0b0" stroke-width="1.3"/><path d="M12.77 9.23L17.01 4.99" stroke="#b0b0b0" stroke-width="1.3"/><circle cx="11" cy="11" r="3.8" fill="#f0f0f0" stroke="#b0b0b0" stroke-width="1.4"/></svg>
<svg style="position:absolute;left:3px;top:601px" width="36" height="39" viewBox="0 0 36 39"><rect x="3.6" y="0.7" width="31.2" height="37.3" fill="#8c8c8c"/><rect x="12.3" y="7" width="16.4" height="8.5" fill="#e0e0e0"/><path d="M1 6.0h5" stroke="#f0f0f0" stroke-width="1.6"/><path d="M0.8 4.6q3 0 5 1.4" stroke="#999" stroke-width="1" fill="none"/><path d="M1 10.2h5" stroke="#f0f0f0" stroke-width="1.6"/><path d="M0.8 8.8q3 0 5 1.4" stroke="#999" stroke-width="1" fill="none"/><path d="M1 14.4h5" stroke="#f0f0f0" stroke-width="1.6"/><path d="M0.8 13.0q3 0 5 1.4" stroke="#999" stroke-width="1" fill="none"/><path d="M1 18.6h5" stroke="#f0f0f0" stroke-width="1.6"/><path d="M0.8 17.200000000000003q3 0 5 1.4" stroke="#999" stroke-width="1" fill="none"/><path d="M1 22.8h5" stroke="#f0f0f0" stroke-width="1.6"/><path d="M0.8 21.4q3 0 5 1.4" stroke="#999" stroke-width="1" fill="none"/><path d="M1 27.0h5" stroke="#f0f0f0" stroke-width="1.6"/><path d="M0.8 25.6q3 0 5 1.4" stroke="#999" stroke-width="1" fill="none"/><path d="M1 31.200000000000003h5" stroke="#f0f0f0" stroke-width="1.6"/><path d="M0.8 29.800000000000004q3 0 5 1.4" stroke="#999" stroke-width="1" fill="none"/></svg>
<svg style="position:absolute;left:3px;top:649px" width="42" height="42" viewBox="0 0 42 42"><circle cx="23.1" cy="19.2" r="14.7" fill="none" stroke="#9c9c9c" stroke-width="4.6"/><path d="M12.5 30L4.5 38" stroke="#9c9c9c" stroke-width="6" stroke-linecap="round"/></svg>
<svg style="position:absolute;left:0px;top:698px" width="48" height="48" viewBox="0 0 48 48"><polygon points="15.1,11.6 31.3,11.6 23.2,3.5" fill="#3daa7e"/><rect x="21.5" y="11.6" width="3.5" height="4.2" fill="#3daa7e"/><polygon points="4,22.6 12.2,14.5 12.2,30.7" fill="#3daa7e"/><rect x="12.2" y="20.9" width="4" height="3.5" fill="#3daa7e"/><polygon points="15.1,34.8 31.3,34.8 23.2,43.5" fill="#3daa7e"/><rect x="21.5" y="30.7" width="3.5" height="4.1" fill="#3daa7e"/><path d="M27 23.5L42 8.5" stroke="#f7b232" stroke-width="4.6" stroke-linecap="butt"/><path d="M40 10.5l2.5-2.5" stroke="#fbc25a" stroke-width="4.6"/><polygon points="24.2,27 25.5,22 29,25.3" fill="#6a6a6a"/></svg>
<svg style="position:absolute;left:0px;top:750px" width="48" height="44" viewBox="0 0 48 44"><path d="M7.5 3C13 5 16 10 11 17S1 28 4.5 33 8.5 36 9 37" stroke="#8c8c8c" stroke-width="1.5" fill="none"/><polygon points="11,39 15,22 26.7,16.4 34.8,24.6 27.8,34.4" fill="#e4e4e4" stroke="#8c8c8c" stroke-width="1.3"/><polygon points="26.7,16.4 33,7 43.5,18 34.8,24.6" fill="#8c8c8c"/><path d="M11 39L22 27.5" stroke="#8c8c8c" stroke-width="1"/><circle cx="22" cy="27.5" r="1.4" fill="#8c8c8c"/></svg>
<div style="position:absolute;left:0px;top:0px;width:1px;height:862px;background:rgba(57,107,172,0.42);"></div>
<div style="position:absolute;left:1330px;top:0px;width:1px;height:862px;background:rgba(57,107,172,0.42);"></div>
</body></html>
